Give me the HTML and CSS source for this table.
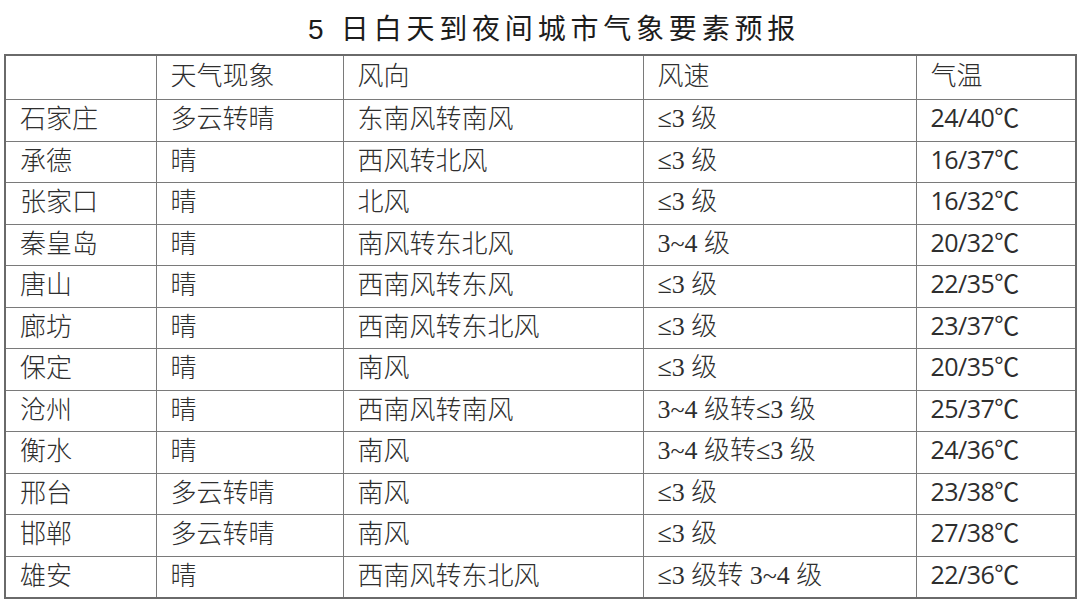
FILE: index.html
```html
<!DOCTYPE html>
<html lang="zh">
<head>
<meta charset="utf-8">
<link rel="stylesheet" href="styles.css">
</head>
<body>
<h1 class="title">5 日白天到夜间城市气象要素预报</h1>
<table class="wx">
<colgroup>
<col class="c1"><col class="c2"><col class="c3"><col class="c4"><col class="c5">
</colgroup>
<thead>
<tr><th></th><th>天气现象</th><th>风向</th><th>风速</th><th>气温</th></tr>
</thead>
<tbody>
<tr><td>石家庄</td><td>多云转晴</td><td>东南风转南风</td><td class="sp">≤3 级</td><td class="t">24/40℃</td></tr>
<tr><td>承德</td><td>晴</td><td>西风转北风</td><td class="sp">≤3 级</td><td class="t">16/37℃</td></tr>
<tr><td>张家口</td><td>晴</td><td>北风</td><td class="sp">≤3 级</td><td class="t">16/32℃</td></tr>
<tr><td>秦皇岛</td><td>晴</td><td>南风转东北风</td><td class="sp">3~4 级</td><td class="t">20/32℃</td></tr>
<tr><td>唐山</td><td>晴</td><td>西南风转东风</td><td class="sp">≤3 级</td><td class="t">22/35℃</td></tr>
<tr><td>廊坊</td><td>晴</td><td>西南风转东北风</td><td class="sp">≤3 级</td><td class="t">23/37℃</td></tr>
<tr><td>保定</td><td>晴</td><td>南风</td><td class="sp">≤3 级</td><td class="t">20/35℃</td></tr>
<tr><td>沧州</td><td>晴</td><td>西南风转南风</td><td class="sp">3~4 级转≤3 级</td><td class="t">25/37℃</td></tr>
<tr><td>衡水</td><td>晴</td><td>南风</td><td class="sp">3~4 级转≤3 级</td><td class="t">24/36℃</td></tr>
<tr><td>邢台</td><td>多云转晴</td><td>南风</td><td class="sp">≤3 级</td><td class="t">23/38℃</td></tr>
<tr><td>邯郸</td><td>多云转晴</td><td>南风</td><td class="sp">≤3 级</td><td class="t">27/38℃</td></tr>
<tr><td>雄安</td><td>晴</td><td>西南风转东北风</td><td class="sp">≤3 级转 3~4 级</td><td class="t">22/36℃</td></tr>
</tbody>
</table>
</body>
</html>
```
FILE: styles.css
```css
html, body {
  margin: 0;
  padding: 0;
  background: #ffffff;
}
body {
  width: 1080px;
  height: 602px;
  overflow: hidden;
  font-family: "Noto Sans CJK SC", sans-serif;
  color: #2e2e2e;
}
.title {
  margin: 0;
  height: 54px;
  box-sizing: border-box;
  padding-top: 13px;
  padding-left: 28px;
  text-align: center;
  font-family: "Liberation Sans", "Noto Sans CJK SC", sans-serif;
  font-weight: normal;
  font-size: 28px;
  line-height: 34px;
  letter-spacing: 4.8px;
  color: #1c1c1c;
}
.wx {
  margin-left: 4px;
  width: 1071px;
  border-collapse: collapse;
  table-layout: fixed;
  border: 2px solid #6a6a6a;
}
.c1 { width: 151px; }
.c2 { width: 187px; }
.c3 { width: 300px; }
.c4 { width: 273px; }
.c5 { width: 160px; }
.wx th, .wx td {
  border: 1px solid #7a7a7a;
  text-align: left;
  padding: 0 0 6px 14px;
  font-weight: 300;
  font-size: 26px;
  line-height: 30px;
  white-space: nowrap;
  font-family: "Noto Sans CJK SC", sans-serif;
}
.wx th {
  height: 36px;
  padding-bottom: 7px;
}
.wx td {
  height: 34.5px;
}
.wx td.sp {
  font-family: "Liberation Serif", "Noto Sans CJK SC", serif;
  padding-top: 2px;
  padding-bottom: 4px;
}
.wx td.t {
  font-family: "Open Sans", "Noto Sans CJK SC", sans-serif;
  font-weight: 400;
  font-size: 25px;
  letter-spacing: -0.5px;
}
```
